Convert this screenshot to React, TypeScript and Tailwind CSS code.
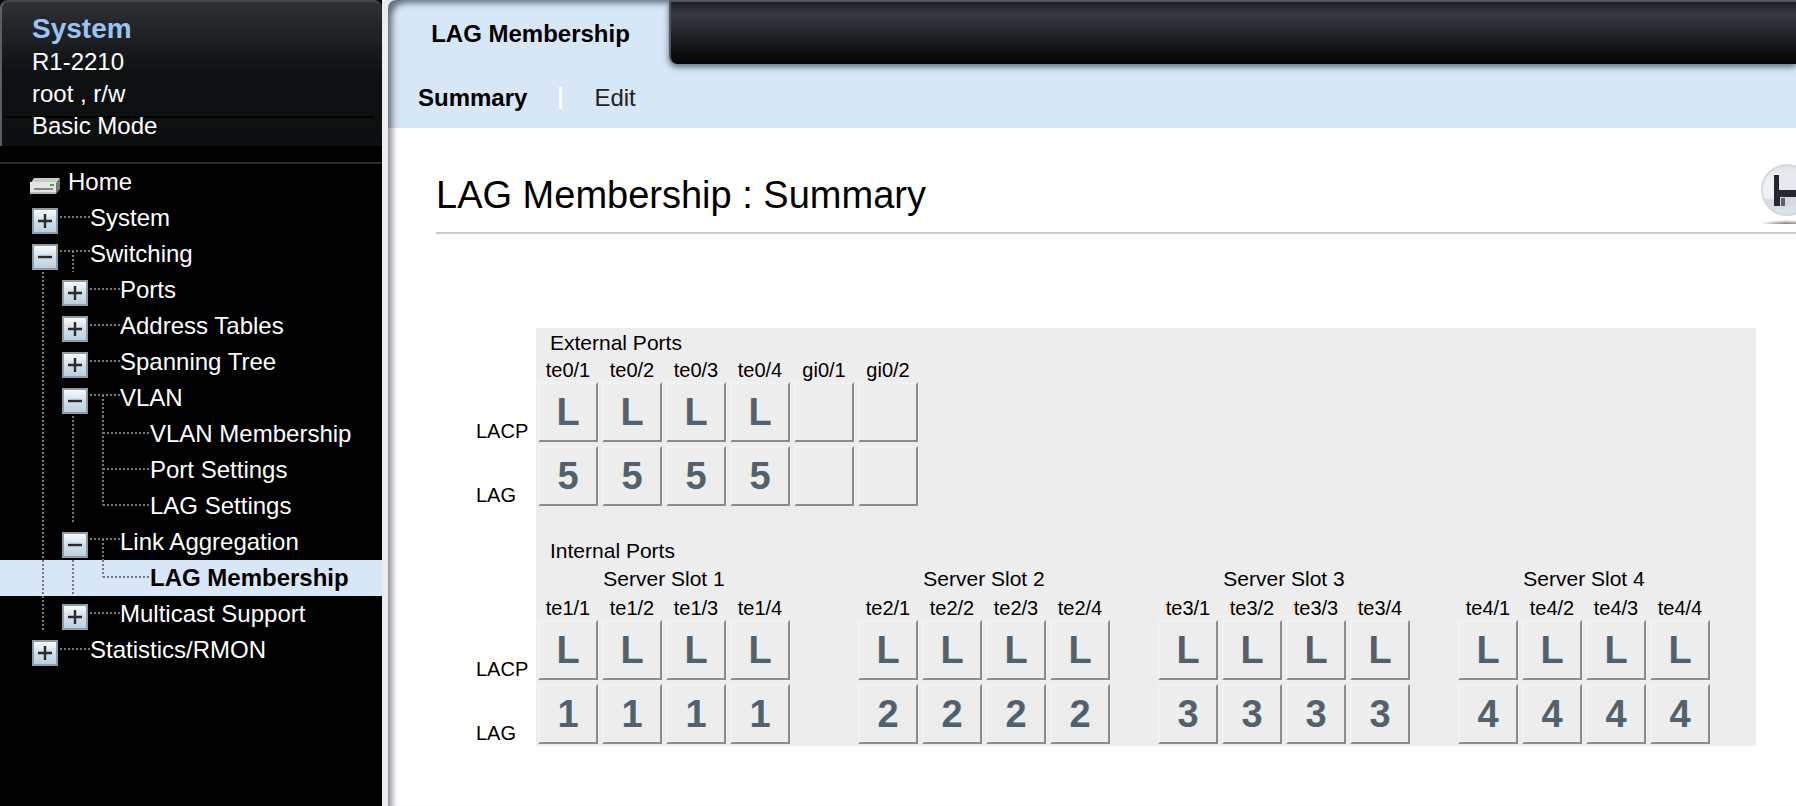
import React from "react";

type Twig = "plus" | "minus" | "leaf";
interface NavNode {
  label: string;
  kind: Twig;
  depth: number;
  last?: boolean;
  active?: boolean;
}

const NAV: NavNode[] = [
  { label: "System", kind: "plus", depth: 0 },
  { label: "Switching", kind: "minus", depth: 0 },
  { label: "Ports", kind: "plus", depth: 1 },
  { label: "Address Tables", kind: "plus", depth: 1 },
  { label: "Spanning Tree", kind: "plus", depth: 1 },
  { label: "VLAN", kind: "minus", depth: 1 },
  { label: "VLAN Membership", kind: "leaf", depth: 2 },
  { label: "Port Settings", kind: "leaf", depth: 2 },
  { label: "LAG Settings", kind: "leaf", depth: 2, last: true },
  { label: "Link Aggregation", kind: "minus", depth: 1 },
  { label: "LAG Membership", kind: "leaf", depth: 2, last: true, active: true },
  { label: "Multicast Support", kind: "plus", depth: 1 },
  { label: "Statistics/RMON", kind: "plus", depth: 0 },
];

function Guide() {
  return (
    <svg width="30" height="36" className="shrink-0" aria-hidden="true">
      <path d="M13 0V36" stroke="#777" strokeWidth="2" strokeDasharray="2 2" />
    </svg>
  );
}

function Toggle({ open, label }: { open: boolean; label: string }) {
  return (
    <button type="button" aria-label={(open ? "Collapse " : "Expand ") + label} className="h-9 w-[30px] shrink-0 cursor-pointer">
      <svg width="30" height="36" aria-hidden="true">
        <defs>
          <linearGradient id="box" x1="0" y1="0" x2="0" y2="1">
            <stop offset="0" stopColor="#fbfcfd" />
            <stop offset="0.5" stopColor="#d3e0e9" />
            <stop offset="1" stopColor="#bccfdd" />
          </linearGradient>
        </defs>
        <rect x="3" y="9" width="24" height="24" fill="url(#box)" stroke="#8b9cab" strokeWidth="2" />
        <path d={open ? "M8 21H22" : "M8 21H22M15 14V28"} stroke="#2b2b2b" strokeWidth="2.4" />
      </svg>
    </button>
  );
}

function Twigs({ kind, last }: { kind: Twig; last?: boolean }) {
  const dots = { stroke: "#777", strokeWidth: 2, strokeDasharray: "2 2", fill: "none" };
  if (kind === "leaf") {
    return (
      <svg width="60" height="36" className="shrink-0" aria-hidden="true">
        <path d={last ? "M13 0V17" : "M13 0V36"} {...dots} />
        <path d="M13 17H60" {...dots} />
      </svg>
    );
  }
  return (
    <svg width="30" height="36" className="shrink-0" aria-hidden="true">
      <path d={kind === "plus" ? "M0 17H30" : "M0 15H30"} {...dots} />
      {kind === "minus" && <path d="M13 15V36" {...dots} />}
    </svg>
  );
}

function DriveIcon() {
  return (
    <svg width="30" height="16" viewBox="0 0 30 16" aria-hidden="true">
      <path d="M4 0H30L26 6H0Z" fill="#c9c9c9" />
      <path d="M30 0V11L26 16V6Z" fill="#777" />
      <rect y="4" width="26" height="12" fill="#e4e4e4" />
      <path d="M0 15H26" stroke="#b5b5b5" strokeWidth="2" />
      <path d="M4 11H23" stroke="#666" strokeWidth="1.5" />
      <rect x="20" y="6" width="4" height="2" fill="#3fb52f" />
    </svg>
  );
}

function Sidebar() {
  return (
    <aside className="w-[382px] shrink-0 bg-black text-[24px] text-white">
      <header className="h-[146px] rounded-t-lg border-t-2 border-l-2 border-t-[#45494c] border-l-[#5a5f62] bg-linear-to-b from-[#2e3035] via-[#0e1112] via-50% to-[#0b0f10] pt-3 pl-7 leading-8">
        <h2 className="pl-0.5 text-[28px] leading-[30px] font-bold text-[#9ac4f6]">System</h2>
        <p className="mt-0.5 pl-0.5">R1-2210</p>
        <p className="pl-0.5">root , r/w</p>
        <p className="mt-1.5 mr-2 -ml-6 border-t-2 border-black pl-[26px] leading-4">Basic Mode</p>
      </header>
      <nav aria-label="Main" className="mt-4 border-t-2 border-[#26292b]">
        <ul>
          <li>
            <a href="#home" className="flex h-9 items-center gap-2 pl-[30px] leading-9">
              <span className="pt-2">
                <DriveIcon />
              </span>
              Home
            </a>
          </li>
          {NAV.map((n) => (
            <li key={n.label} className={n.active ? "flex h-9 bg-[#d7e7f6] pl-[30px]" : "flex h-9 pl-[30px]"}>
              {Array.from({ length: n.depth }, (_, i) => (
                <Guide key={i} />
              ))}
              {n.kind !== "leaf" && <Toggle open={n.kind === "minus"} label={n.label} />}
              <Twigs kind={n.kind} last={n.last} />
              <a href="#page" className={n.active ? "leading-9 font-bold text-black" : "leading-9"}>
                {n.label}
              </a>
            </li>
          ))}
        </ul>
      </nav>
    </aside>
  );
}

function Cell({ value }: { value: string }) {
  return (
    <td className="p-0">
      <div className="m-0.5 flex h-[60px] w-[60px] items-center justify-center border-2 border-t-[#f1f1f1] border-r-[#8c8c8c] border-b-[#8c8c8c] border-l-[#f1f1f1] text-[38px] leading-none font-bold text-[#52616e]">
        {value}
      </div>
    </td>
  );
}

function PortTable({ caption, ports, lag, lacp }: { caption: string; ports: string[]; lag: string; lacp: number }) {
  return (
    <table className="border-collapse" aria-label={caption}>
      <thead>
        <tr>
          {ports.map((p) => (
            <th key={p} scope="col" className="p-0 text-center text-[20px] leading-5 font-normal">
              {p}
            </th>
          ))}
        </tr>
      </thead>
      <tbody>
        <tr>
          {ports.map((p, i) => (
            <Cell key={p} value={i < lacp ? "L" : ""} />
          ))}
        </tr>
        <tr>
          {ports.map((p, i) => (
            <Cell key={p} value={i < lacp ? lag : ""} />
          ))}
        </tr>
      </tbody>
    </table>
  );
}

function RowLabels({ className }: { className: string }) {
  return (
    <div className={className}>
      <span className="h-16">LACP</span>
      <span className="h-16">LAG</span>
    </div>
  );
}

function SaveIcon() {
  return (
    <svg width="54" height="60" viewBox="0 0 54 60" aria-hidden="true">
      <defs>
        <linearGradient id="disc" x1="0" y1="0" x2="0" y2="1">
          <stop offset="0" stopColor="#dde1e6" />
          <stop offset="0.3" stopColor="#f0f3f5" />
          <stop offset="0.66" stopColor="#eef1f4" />
          <stop offset="0.7" stopColor="#d3dae3" />
          <stop offset="1" stopColor="#dfe5ee" />
        </linearGradient>
        <radialGradient id="shade">
          <stop offset="0" stopColor="#777" />
          <stop offset="1" stopColor="#fff" />
        </radialGradient>
      </defs>
      <circle cx="27" cy="26" r="25" fill="url(#disc)" stroke="#d3d9e1" strokeWidth="2" />
      <path d="M14 11H43V42H14Z" fill="#25292d" />
      <path d="M19 11H38V26H19Z" fill="#e6eaee" />
      <path d="M20 33H38V42H20Z" fill="#d5dade" />
      <path d="M21 34H25V42H21Z" fill="#5b6066" />
      <ellipse cx="27" cy="60" rx="27" ry="4" fill="url(#shade)" />
    </svg>
  );
}

export default function App() {
  return (
    <div className="flex min-h-screen overflow-hidden bg-[#ececee] font-['Liberation_Sans',Arial,sans-serif] text-black">
      <Sidebar />
      <main className="ml-1.5 min-w-0 flex-1 overflow-hidden rounded-tl-lg bg-white shadow-[inset_10px_0_6px_-6px_#8b8d97]">
        <div className="h-32 rounded-tl-lg bg-[#d7e7f6] shadow-[inset_10px_9px_6px_-6px_#61707f]">
          <div className="flex h-16">
            <button type="button" className="w-[281px] shrink-0 pt-1 pl-1 text-center text-[24px] font-bold">
              LAG Membership
            </button>
            <div className="flex-1 rounded-bl-lg border-t-2 border-l-2 border-[#50565b] bg-linear-to-b from-[#1d2024] via-[#373a42] via-20% to-[#050505] shadow-[0_3px_6px_#5a6b7d]" />
          </div>
          <nav aria-label="Views" className="flex h-16 items-center gap-8 pt-1 pl-[30px] text-[24px]">
            <a href="#summary" className="font-bold">Summary</a>
            <span className="h-[22px] w-[3px] bg-white" />
            <a href="#edit" className="text-[#222]">Edit</a>
          </nav>
        </div>
        <div className="pl-12">
          <div className="flex h-[106px] items-start justify-between overflow-hidden border-b-2 border-[#cacaca]">
            <h1 className="pt-10 text-[38px] leading-[54px] whitespace-nowrap">LAG Membership : Summary</h1>
            <button type="button" aria-label="Save" className="-mr-[18px] mt-9 shrink-0">
              <SaveIcon />
            </button>
          </div>
          <div className="mt-[94px] mr-10 flex pl-10">
            <div className="flex w-[60px] shrink-0 flex-col text-[20px] leading-7">
              <RowLabels className="mt-[89px] flex flex-col" />
              <RowLabels className="mt-[110px] -mb-10 flex flex-col" />
            </div>
            <section className="flex-1 bg-[#ededed]">
              <h2 className="h-8 pl-3.5 text-[21px] leading-[30px]">External Ports</h2>
              <PortTable caption="External Ports" ports={["te0/1", "te0/2", "te0/3", "te0/4", "gi0/1", "gi0/2"]} lag="5" lacp={4} />
              <h2 className="mt-7 h-7 pl-3.5 text-[21px] leading-[30px]">Internal Ports</h2>
              <div className="flex">
                {["1", "2", "3", "4"].map((s) => (
                  <div key={s} className={s === "1" ? "mr-16" : s === "4" ? "" : "mr-11"}>
                    <h3 className="h-[34px] text-center text-[21px] leading-[30px]">Server Slot {s}</h3>
                    <PortTable caption={"Server Slot " + s} ports={["te" + s + "/1", "te" + s + "/2", "te" + s + "/3", "te" + s + "/4"]} lag={s} lacp={4} />
                  </div>
                ))}
              </div>
            </section>
          </div>
        </div>
      </main>
    </div>
  );
}
